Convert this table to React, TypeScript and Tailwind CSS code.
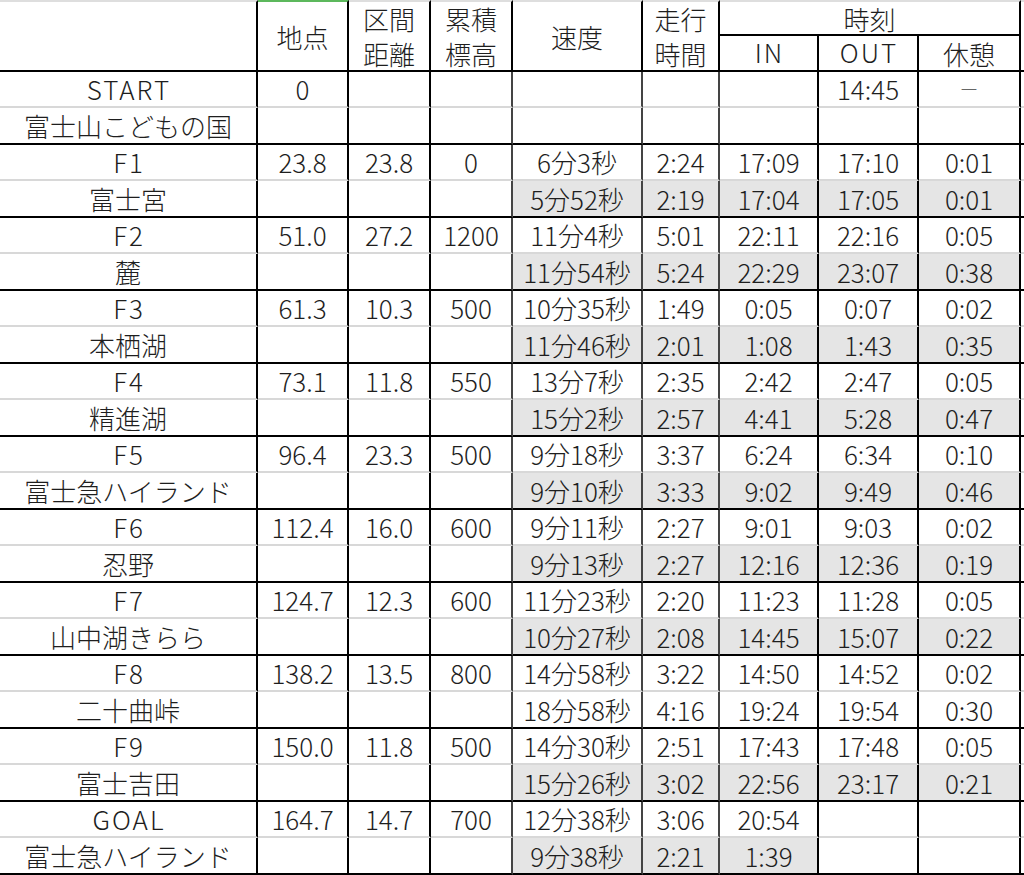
import React from 'react';

type Group = {
  main: string[];
  sub: string[];
  shade: number; // number of shaded cells in the sub row, counted from 速度
};

const groups: Group[] = [
  { main: ['START', '0', '', '', '', '', '', '14:45', '－'], sub: ['富士山こどもの国', '', '', '', '', '', '', '', ''], shade: 0 },
  { main: ['F1', '23.8', '23.8', '0', '6分3秒', '2:24', '17:09', '17:10', '0:01'], sub: ['富士宮', '', '', '', '5分52秒', '2:19', '17:04', '17:05', '0:01'], shade: 5 },
  { main: ['F2', '51.0', '27.2', '1200', '11分4秒', '5:01', '22:11', '22:16', '0:05'], sub: ['麓', '', '', '', '11分54秒', '5:24', '22:29', '23:07', '0:38'], shade: 5 },
  { main: ['F3', '61.3', '10.3', '500', '10分35秒', '1:49', '0:05', '0:07', '0:02'], sub: ['本栖湖', '', '', '', '11分46秒', '2:01', '1:08', '1:43', '0:35'], shade: 5 },
  { main: ['F4', '73.1', '11.8', '550', '13分7秒', '2:35', '2:42', '2:47', '0:05'], sub: ['精進湖', '', '', '', '15分2秒', '2:57', '4:41', '5:28', '0:47'], shade: 5 },
  { main: ['F5', '96.4', '23.3', '500', '9分18秒', '3:37', '6:24', '6:34', '0:10'], sub: ['富士急ハイランド', '', '', '', '9分10秒', '3:33', '9:02', '9:49', '0:46'], shade: 5 },
  { main: ['F6', '112.4', '16.0', '600', '9分11秒', '2:27', '9:01', '9:03', '0:02'], sub: ['忍野', '', '', '', '9分13秒', '2:27', '12:16', '12:36', '0:19'], shade: 5 },
  { main: ['F7', '124.7', '12.3', '600', '11分23秒', '2:20', '11:23', '11:28', '0:05'], sub: ['山中湖きらら', '', '', '', '10分27秒', '2:08', '14:45', '15:07', '0:22'], shade: 5 },
  { main: ['F8', '138.2', '13.5', '800', '14分58秒', '3:22', '14:50', '14:52', '0:02'], sub: ['二十曲峠', '', '', '', '18分58秒', '4:16', '19:24', '19:54', '0:30'], shade: 0 },
  { main: ['F9', '150.0', '11.8', '500', '14分30秒', '2:51', '17:43', '17:48', '0:05'], sub: ['富士吉田', '', '', '', '15分26秒', '3:02', '22:56', '23:17', '0:21'], shade: 5 },
  { main: ['GOAL', '164.7', '14.7', '700', '12分38秒', '3:06', '20:54', '', ''], sub: ['富士急ハイランド', '', '', '', '9分38秒', '2:21', '1:39', '', ''], shade: 3 },
];

// right border colour per column: the speed / time block uses a dark grey rule
const rightBorder = [
  'border-r-black',
  'border-r-black',
  'border-r-black',
  'border-r-[#444]',
  'border-r-[#444]',
  'border-r-[#444]',
  'border-r-black',
  'border-r-black',
  'border-r-black',
];

function HeadCell({ children, className = '' }: { children?: React.ReactNode; className?: string }) {
  return (
    <div
      className={`flex flex-col items-center justify-center border-r-2 border-r-black border-b-2 border-b-black leading-[35px] ${className}`}
    >
      {children}
    </div>
  );
}

function DataRow({ cells, sub, shade }: { cells: string[]; sub: boolean; shade: number }) {
  return (
    <>
      {cells.map((text, i) => {
        const shaded = sub && i >= 4 && i < 4 + shade;
        const latin = /^[A-Z]/.test(text);
        return (
          <div
            key={i}
            className={`flex items-center justify-center border-r-2 border-b-2 whitespace-nowrap ${rightBorder[i]} ${
              sub ? 'border-b-black' : 'border-b-[#d8d8d8]'
            } ${shaded ? 'bg-[#e5e5e5]' : 'bg-white'}`}
          >
            {text === '－' ? (
              <span className="text-[20px] text-[#666]">－</span>
            ) : (
              <span className={latin ? 'tracking-[2px] pl-[2px]' : ''}>{text}</span>
            )}
          </div>
        );
      })}
      <div className={sub ? 'border-b-2 border-b-black' : 'border-b-2 border-b-[#d8d8d8]'} />
    </>
  );
}

export default function App() {
  return (
    <div className="w-[1024px] h-[875px] overflow-hidden bg-white text-[#1e1e1e] font-['Noto_Sans_CJK_JP','Noto_Sans',sans-serif] font-light text-[26px] leading-none">
      <div className="grid grid-cols-[258px_91px_82px_82px_130px_77px_99px_100px_102px_3px] grid-rows-[36px_36px_repeat(11,36px_37px)]">
        {/* Header */}
        <HeadCell className="row-span-2 border-t-2 border-t-[#dedede]" />
        <HeadCell className="row-span-2 border-t-2 border-t-[#5cb85c]">地点</HeadCell>
        <HeadCell className="row-span-2 border-t-2 border-t-[#dedede]">
          <span>区間</span>
          <span>距離</span>
        </HeadCell>
        <HeadCell className="row-span-2 border-t-2 border-t-[#dedede]">
          <span>累積</span>
          <span>標高</span>
        </HeadCell>
        <HeadCell className="row-span-2 border-t-2 border-t-[#dedede]">速度</HeadCell>
        <HeadCell className="row-span-2 border-t-2 border-t-[#dedede]">
          <span>走行</span>
          <span>時間</span>
        </HeadCell>
        <HeadCell className="col-span-3 border-t-2 border-t-[#dedede]">時刻</HeadCell>
        <div className="row-span-2 border-t-2 border-t-[#dedede] border-b-2 border-b-black" />
        <HeadCell className="pb-[3px] tracking-[2px] pl-[2px]">IN</HeadCell>
        <HeadCell className="pb-[3px] tracking-[2px] pl-[2px]">OUT</HeadCell>
        <HeadCell>休憩</HeadCell>

        {/* Body */}
        {groups.map((g, i) => (
          <React.Fragment key={i}>
            <DataRow cells={g.main} sub={false} shade={0} />
            <DataRow cells={g.sub} sub={true} shade={g.shade} />
          </React.Fragment>
        ))}
      </div>
    </div>
  );
}
